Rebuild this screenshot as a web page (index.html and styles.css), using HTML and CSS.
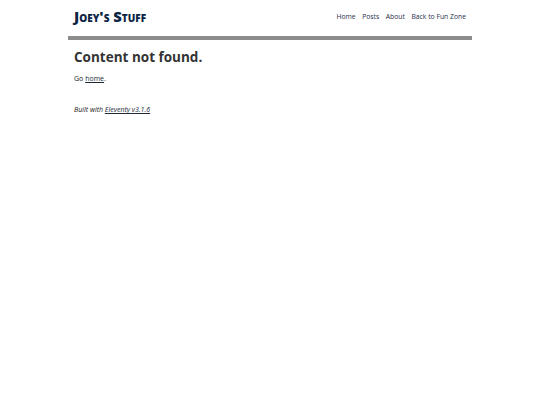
FILE: index.html
```html
<!DOCTYPE html>
<html lang="en">
<head>
<meta charset="utf-8">
<title>Content not found</title>
<link rel="stylesheet" href="styles.css">
</head>
<body>
<div class="page">
  <header class="site-header">
    <a class="site-title" href="#">Joey's Stuff</a>
    <nav class="site-nav">
      <a href="#">Home</a>
      <a href="#">Posts</a>
      <a href="#">About</a>
      <a href="#">Back to Fun Zone</a>
    </nav>
  </header>
  <main class="content">
    <h1 class="title">Content not found.</h1>
    <p class="text">Go <a href="#">home</a>.</p>
  </main>
  <footer class="site-footer">
    <p><em>Built with <a href="#">Eleventy v3.1.6</a></em></p>
  </footer>
</div>
</body>
</html>
```

FILE: styles.css
```css
html, body {
  margin: 0;
  padding: 0;
  background: #ffffff;
}
body {
  font-family: "Open Sans", "Noto Sans", sans-serif;
  color: #222222;
  font-size: 7px;
  line-height: 1.5;
}
.page {
  width: 404px;
  margin: 0 auto;
}
.site-header {
  display: flex;
  justify-content: space-between;
  align-items: center;
  height: 35.5px;
  padding: 0 6px;
  border-bottom: 4.5px solid #8c8c8c;
}
.site-title {
  font-size: 14.8px;
  line-height: 1.2;
  font-weight: 800;
  font-variant: small-caps;
  color: #0d2545;
  text-decoration: none;
  margin-top: -2px;
}
.site-nav {
  display: flex;
  gap: 6.5px;
  margin-top: -1px;
}
.site-nav a {
  color: #1f2f4a;
  text-decoration: none;
  font-size: 6.8px;
}
.content {
  padding: 0 6px;
}
.title {
  font-size: 13.5px;
  font-weight: 700;
  color: #333333;
  margin: 7px 0 7px;
}
.text {
  margin: 0;
}
.text a, .site-footer a {
  color: #222a3a;
}
.site-footer {
  padding: 0 6px;
}
.site-footer p {
  margin: 21px 0 0;
}
```
